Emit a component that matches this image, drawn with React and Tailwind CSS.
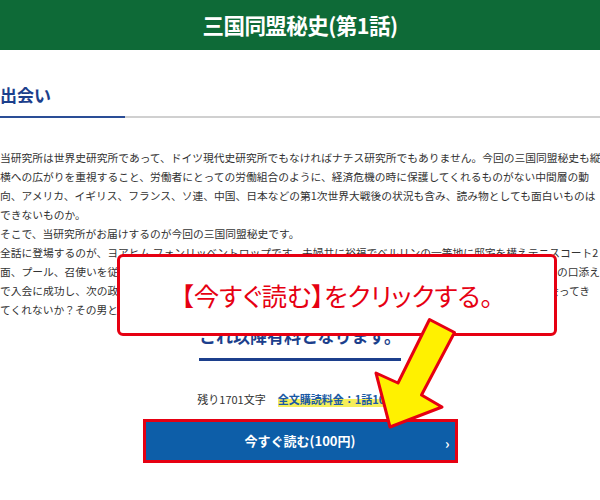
import React from "react";

const bodyLines = [
  "当研究所は世界史研究所であって、ドイツ現代史研究所でもなければナチス研究所でもありません。今回の三国同盟秘史も縦",
  "横への広がりを重視すること、労働者にとっての労働組合のように、経済危機の時に保護してくれるものがない中間層の動",
  "向、アメリカ、イギリス、フランス、ソ連、中国、日本などの第1次世界大戦後の状況も含み、読み物としても面白いものは",
  "できないものか。",
  "そこで、当研究所がお届けするのが今回の三国同盟秘史です。",
  "全話に登場するのが、ヨアヒム フォンリッベントロップです。夫婦共に裕福でベルリンの一等地に邸宅を構えテニスコート2",
  "面、プール、召使いを従えていたが、それで満足せず、貴族だけが入会できるクラブにフランツ・フォン・パーペンの口添え",
  "で入会に成功し、次の政界への足がかりを探していた。そんな折、旧知の実業家の友人から、ヒトラーという男に会ってき",
  "てくれないか？その男と話をしてほしいと頼まれる。",
];

function App() {
  return (
    <div
      className="relative w-[600px] h-[500px] overflow-hidden bg-white"
      style={{ fontFamily: '"Noto Sans CJK JP", "Noto Sans", sans-serif' }}
    >
      {/* Header */}
      <div className="h-[50px] bg-[#0e6a37] flex items-center justify-center">
        <h1 className="text-white text-[21.5px] font-bold tracking-tight">三国同盟秘史(第1話)</h1>
      </div>

      {/* Section title */}
      <div className="pt-[32px]">
        <h2 className="text-[17px] font-bold text-[#1c3f8c] leading-[26px]">出会い</h2>
        <div className="mt-[8px] h-[2px] bg-[#d0d0d0] flex">
          <div className="w-[125px] bg-[#2a4d96]" />
        </div>
      </div>

      {/* Body */}
      <div className="mt-[30px] text-[10.75px] leading-[19px] text-[#333]">
        {bodyLines.map((line, i) => (
          <div key={i} className="whitespace-nowrap overflow-hidden">
            {line}
          </div>
        ))}
      </div>

      {/* Paywall notice */}
      <div className="flex justify-center mt-[6px]">
        <p className="text-[17px] font-bold text-[#1c3f8c] leading-[22px] pb-[11px] border-b-[3px] border-[#1c3f8c]">
          これ以降有料となります。
        </p>
      </div>

      <div className="flex justify-center items-center gap-[12px] mt-[30px] text-[11px] leading-[16px]">
        <span className="text-[#333]">残り1701文字</span>
        <span className="font-bold text-[#1a5aa5] bg-[linear-gradient(transparent_50%,#f5ee5a_50%)]">
          全文購読料金：1話100円
        </span>
      </div>

      <div className="flex justify-center mt-[12px]">
        <div className="w-[315px] border-[3px] border-[#e60012]">
          <button className="w-full h-[38px] bg-[#0d5ea8] text-white text-[13px] font-bold flex items-center justify-center relative">
            今すぐ読む(100円)
            <span className="absolute right-[5px] top-[12px] text-[14px] leading-[18px]">›</span>
          </button>
        </div>
      </div>

      {/* Callout overlay */}
      <div className="absolute left-[117px] top-[254px] w-[440px] h-[82px] bg-white border-[3px] border-[#e60012] rounded-[6px] flex items-center justify-center">
        <span className="text-[25.5px] text-[#e60012] leading-none [font-feature-settings:'palt']">
          【今すぐ読む】をクリックする。
        </span>
      </div>

      {/* Arrow overlay */}
      <svg className="absolute left-0 top-0 pointer-events-none" width="600" height="500" viewBox="0 0 600 500">
        <polygon
          points="454.5,332.5 429.5,319.5 398,383 376,373 390,427 442,407 421.5,395"
          fill="#fff100"
          stroke="#e60012"
          strokeWidth="3"
          strokeLinejoin="round"
        />
      </svg>
    </div>
  );
}

export default App;
